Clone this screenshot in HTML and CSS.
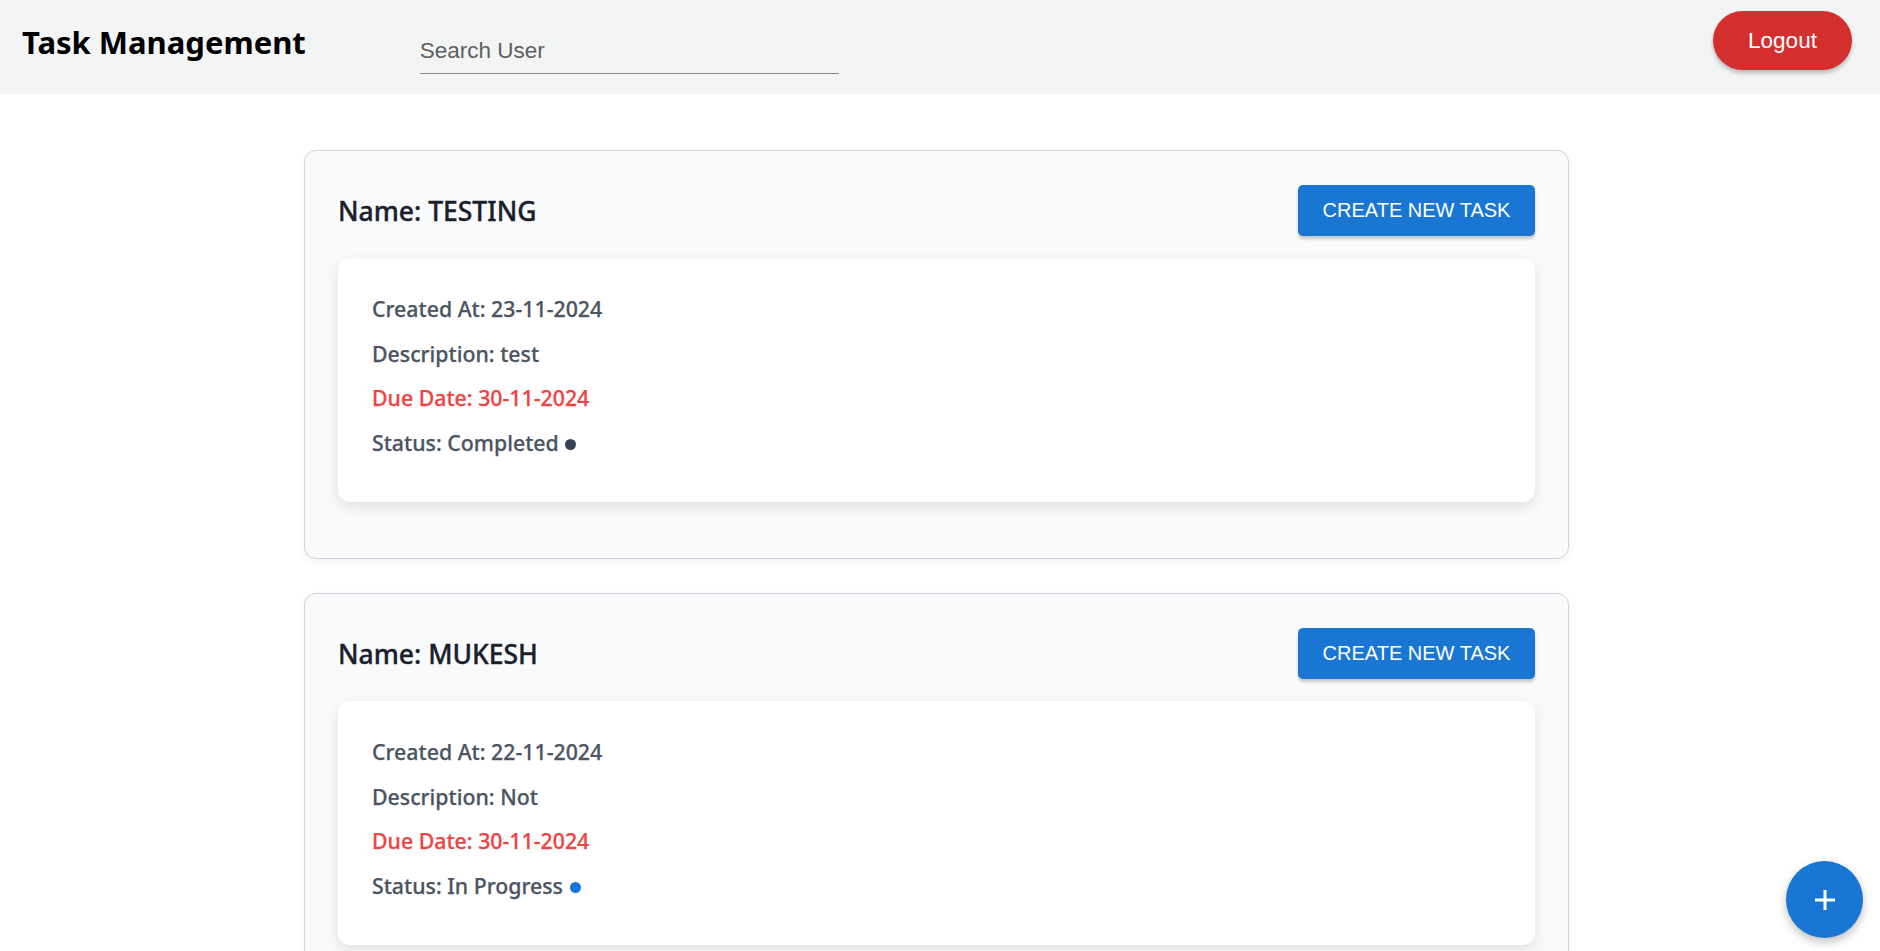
FILE: index.html
```html
<!DOCTYPE html>
<html lang="en">
<head>
  <meta charset="UTF-8" />
  <meta name="viewport" content="width=device-width, initial-scale=1.0"/>
  <title>Task Management</title>
  <link rel="stylesheet" href="styles.css">
</head>
<body>
  <header class="topbar">
    <h1 class="brand">Task Management</h1>
    <div class="search">
      <input type="text" placeholder="Search User" />
    </div>
    <button class="logout">Logout</button>
  </header>

  <main class="user-list">
    <!-- Пользователь 1 -->
    <section class="user-card">
      <div class="user-head">
        <h2>Name: TESTING</h2>
        <button class="create-btn">CREATE NEW TASK</button>
      </div>
      <div class="task-card">
        <p>Created At: 23-11-2024</p>
        <p>Description: test</p>
        <p class="due">Due Date: 30-11-2024</p>
        <p>Status: Completed <span class="dot dot-done"></span></p>
      </div>
    </section>

    <!-- Пользователь 2 -->
    <section class="user-card">
      <div class="user-head">
        <h2>Name: MUKESH</h2>
        <button class="create-btn">CREATE NEW TASK</button>
      </div>
      <div class="task-card">
        <p>Created At: 22-11-2024</p>
        <p>Description: Not</p>
        <p class="due">Due Date: 30-11-2024</p>
        <p>Status: In Progress <span class="dot dot-progress"></span></p>
      </div>
    </section>
  </main>

  <button class="fab" aria-label="add">
    <svg width="22" height="22" viewBox="0 0 22 22">
      <path d="M11 1v20M1 11h20" stroke="#fff" stroke-width="3"/>
    </svg>
  </button>
</body>
</html>
```

FILE: styles.css
```css
:root {
  --blue: #1976d2;
  --red: #d32f2f;
  --text: #4b5563;
  --head: #1a202c;
  --due: #ef4444;
}

body {
  margin: 0;
  font-family: "Segoe UI", "Noto Sans", sans-serif;
  background: #fff;
}

.topbar {
  display: flex;
  align-items: flex-start;
  height: 94px;
  box-sizing: border-box;
  padding: 11px 28px 0 22px;
  background: #f3f4f4;
}

.brand {
  margin: 10px 0 0;
  font-size: 31px;
  font-weight: 700;
  color: #000;
  line-height: 42px;
}

.search {
  margin-left: 114px;
  margin-top: 21px;
  width: 419px;
  border-bottom: 1px solid #8a8a8a;
}

.search input {
  width: 100%;
  border: none;
  background: transparent;
  outline: none;
  padding: 6px 0 9px;
  font-family: "Liberation Sans", Arial, sans-serif;
  font-size: 22.5px;
  color: #333;
}

.search input::placeholder {
  color: #5f5f5f;
}

.logout {
  margin-left: auto;
  width: 139px;
  height: 59px;
  border: none;
  border-radius: 30px;
  background: var(--red);
  color: #fff;
  font-family: "Liberation Sans", Arial, sans-serif;
  font-size: 22.5px;
  box-shadow: 0 3px 4px rgba(0, 0, 0, 0.25);
}

.user-list {
  width: 1265px;
  margin-left: calc(50% - 636px);
  padding-top: 56px;
  display: flex;
  flex-direction: column;
  gap: 34px;
}

.user-card {
  border: 1px solid #d1d5db;
  border-radius: 12px;
  background: #f9fafb;
  padding: 34px 33px 56px;
  box-shadow: 0 2px 6px rgba(0, 0, 0, 0.06);
}

.user-head {
  display: flex;
  justify-content: space-between;
  align-items: center;
  margin-bottom: 22px;
}

.user-head h2 {
  margin: 0;
  font-size: 26.5px;
  font-weight: 500;
  color: var(--head);
  -webkit-text-stroke: 0.35px var(--head);
}

.create-btn {
  width: 237px;
  height: 51px;
  border: none;
  border-radius: 5px;
  background: var(--blue);
  color: #fff;
  font-family: "Liberation Sans", Arial, sans-serif;
  font-size: 20px;
  box-shadow: 0 3px 3px rgba(0, 0, 0, 0.2);
}

.task-card {
  background: #fff;
  border-radius: 12px;
  padding: 29px 34px 37px;
  box-shadow: 0 5px 14px rgba(0, 0, 0, 0.1);
}

.task-card p {
  margin: 0;
  line-height: 44.5px;
  font-size: 21.3px;
  font-weight: 500;
  color: var(--text);
  -webkit-text-stroke: 0.25px currentColor;
}

.task-card p.due {
  color: var(--due);
}

.dot {
  display: inline-block;
  width: 11px;
  height: 11px;
  border-radius: 50%;
  margin-left: 1px;
  vertical-align: 1px;
}

.dot-done { background: #374151; }
.dot-progress { background: var(--blue); }

.fab {
  position: fixed;
  right: 17px;
  bottom: 13px;
  width: 77px;
  height: 77px;
  border: none;
  border-radius: 50%;
  background: var(--blue);
  display: flex;
  align-items: center;
  justify-content: center;
  box-shadow: 0 4px 10px rgba(0, 0, 0, 0.25);
}
```
